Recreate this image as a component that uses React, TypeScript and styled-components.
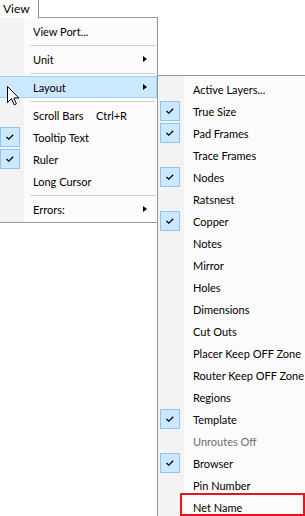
import React from 'react';
import styled, { createGlobalStyle } from 'styled-components';

const GlobalStyle = createGlobalStyle`
  html, body {
    margin: 0;
    padding: 0;
    background: #fff;
    overflow: hidden;
  }
  body {
    font-family: Lato, "Liberation Sans", sans-serif;
    font-size: 11px;
    color: #000;
  }
`;

type Entry =
  | { kind: 'item'; label: string; checked?: boolean; sub?: boolean; shortcut?: string; active?: boolean }
  | { kind: 'sep' };

const viewMenu: Entry[] = [
  { kind: 'item', label: 'View Port...' },
  { kind: 'sep' },
  { kind: 'item', label: 'Unit', sub: true },
  { kind: 'sep' },
  { kind: 'item', label: 'Layout', sub: true, active: true },
  { kind: 'sep' },
  { kind: 'item', label: 'Scroll Bars', shortcut: 'Ctrl+R' },
  { kind: 'item', label: 'Tooltip Text', checked: true },
  { kind: 'item', label: 'Ruler', checked: true },
  { kind: 'item', label: 'Long Cursor' },
  { kind: 'sep' },
  { kind: 'item', label: 'Errors:', sub: true },
];

type LayoutItem = { label: string; checked?: boolean; disabled?: boolean; marked?: boolean };

const layoutMenu: LayoutItem[] = [
  { label: 'Active Layers...' },
  { label: 'True Size', checked: true },
  { label: 'Pad Frames', checked: true },
  { label: 'Trace Frames' },
  { label: 'Nodes', checked: true },
  { label: 'Ratsnest' },
  { label: 'Copper', checked: true },
  { label: 'Notes' },
  { label: 'Mirror' },
  { label: 'Holes' },
  { label: 'Dimensions' },
  { label: 'Cut Outs' },
  { label: 'Placer Keep OFF Zone' },
  { label: 'Router Keep OFF Zone' },
  { label: 'Regions' },
  { label: 'Template', checked: true },
  { label: 'Unroutes Off', disabled: true },
  { label: 'Browser', checked: true },
  { label: 'Pin Number' },
  { label: 'Net Name', marked: true },
];

function Check() {
  return (
    <CheckBox>
      <svg width="18" height="18" viewBox="0 0 18 18">
        <path d="M5.5 9 L7.8 11.2 L12.2 6.8" fill="none" stroke="#000" strokeWidth="1.3" />
      </svg>
    </CheckBox>
  );
}

// mouse pointer resting on the Layout row
function Cursor() {
  return (
    <CursorArt width="13" height="20" viewBox="0 0 13 20">
      <path
        d="M0.5 0.5 L0.5 16.5 L4.5 12.7 L7.2 18.8 L9.4 17.9 L6.8 12 L11.8 12 Z"
        fill="#fff"
        stroke="#000"
        strokeWidth="1"
      />
    </CursorArt>
  );
}

export default function App() {
  return (
    <Page>
      <GlobalStyle />
      <Menus>
        <Tab>View</Tab>
        <MenuRow>
          <Dropdown>
            {viewMenu.map((e, i) =>
              e.kind === 'sep' ? (
                <Separator key={i} />
              ) : (
                <Row key={i} $active={e.active}>
                  <Gutter>{e.checked && <Check />}</Gutter>
                  <Label $wide={!!e.shortcut}>{e.label}</Label>
                  {e.shortcut && <span>{e.shortcut}</span>}
                  {e.sub && <Arrow />}
                </Row>
              )
            )}
          </Dropdown>
          <Submenu>
            {layoutMenu.map((item) => (
              <Row key={item.label} $marked={item.marked}>
                <Gutter>{item.checked && <Check />}</Gutter>
                <Label $disabled={item.disabled}>{item.label}</Label>
              </Row>
            ))}
          </Submenu>
        </MenuRow>
      </Menus>
      <Cursor />
    </Page>
  );
}

const Page = styled.div`
  position: relative;
  width: 305px;
  height: 516px;
  overflow: hidden;
  background: #fff;
`;

const Menus = styled.div`
  margin-left: -3px;
`;

const Tab = styled.div`
  position: relative;
  z-index: 1;
  width: 42px;
  height: 18px;
  margin-bottom: -1px;
  box-sizing: border-box;
  padding-left: 6px;
  line-height: 17px;
  font-size: 12px;
  background: #fff;
  border-right: 1px solid #8a8a8a;
`;

const MenuRow = styled.div`
  display: flex;
  align-items: flex-start;
`;

const menuPanel = `
  flex: none;
  box-sizing: border-box;
  border: 1px solid #979797;
  background: linear-gradient(to right, #f3f3f3 0 26px, #fbfbfb 26px);
`;

const Dropdown = styled.div`
  ${menuPanel}
  width: 161px;
  padding: 2px 0;
`;

const Submenu = styled.div`
  ${menuPanel}
  width: 160px;
  margin-left: -1px;
  margin-top: 58px;
  padding-top: 2px;
  height: 460px;
`;

const Row = styled.div<{ $active?: boolean; $marked?: boolean }>`
  position: relative;
  display: flex;
  align-items: center;
  height: 22px;
  box-sizing: border-box;
  white-space: nowrap;
  background: ${(p) => (p.$active ? '#cce8ff' : 'transparent')};
  box-shadow: ${(p) => (p.$active ? 'inset 0 0 0 1px #99d1ff' : 'none')};

  ${(p) =>
    p.$marked &&
    `
    &::after {
      content: '';
      position: absolute;
      left: 22px;
      right: 11px;
      top: -3px;
      height: 23px;
      box-sizing: border-box;
      border: 2px solid #e8141c;
    }
  `}
`;

const Gutter = styled.div`
  flex: none;
  width: 35px;
  height: 22px;
  box-sizing: border-box;
  padding: 1px 0 0 2px;
`;

const CheckBox = styled.div`
  width: 20px;
  height: 20px;
  box-sizing: border-box;
  border: 1px solid #8fc5f3;
  background: #cce8ff;
  svg {
    display: block;
  }
`;

const Label = styled.span<{ $wide?: boolean; $disabled?: boolean }>`
  min-width: ${(p) => (p.$wide ? '63px' : '0')};
  color: ${(p) => (p.$disabled ? '#6d6d78' : '#000')};
`;

const Arrow = styled.span`
  margin-left: auto;
  margin-right: 10px;
  width: 0;
  height: 0;
  border-top: 3.5px solid transparent;
  border-bottom: 3.5px solid transparent;
  border-left: 4px solid #000;
`;

const Separator = styled.div`
  height: 6px;
  position: relative;
  &::after {
    content: '';
    position: absolute;
    left: 32px;
    right: 2px;
    top: 3px;
    height: 1px;
    background: #cfcfcf;
  }
`;

const CursorArt = styled.svg`
  position: absolute;
  left: 7px;
  top: 86px;
`;
